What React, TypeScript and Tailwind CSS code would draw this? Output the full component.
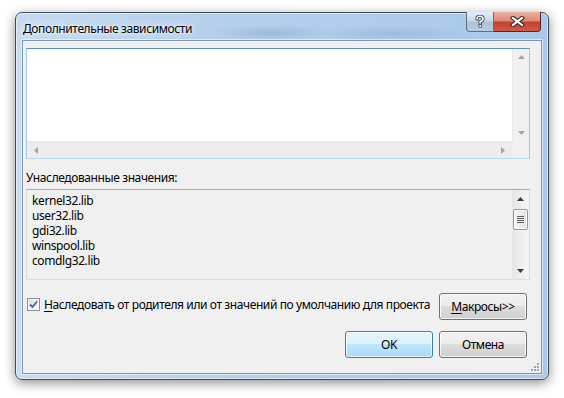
import React from 'react';

const UpArrow = ({ color }: { color: string }) => (
  <svg width="7" height="4" viewBox="0 0 7 4"><path d="M3.5 0 L7 4 L0 4 Z" fill={color} /></svg>
);
const DownArrow = ({ color }: { color: string }) => (
  <svg width="7" height="4" viewBox="0 0 7 4"><path d="M0 0 L7 0 L3.5 4 Z" fill={color} /></svg>
);
const LeftArrow = ({ color }: { color: string }) => (
  <svg width="4" height="7" viewBox="0 0 4 7"><path d="M4 0 L4 7 L0 3.5 Z" fill={color} /></svg>
);
const RightArrow = ({ color }: { color: string }) => (
  <svg width="4" height="7" viewBox="0 0 4 7"><path d="M0 0 L4 3.5 L0 7 Z" fill={color} /></svg>
);

const Button = ({ children, primary }: { children: React.ReactNode; primary?: boolean }) => (
  <button
    className={
      primary
        ? 'w-[88px] h-[27px] rounded-[3px] border border-[#3c7fb1] bg-[linear-gradient(to_bottom,#eaf6fd_0%,#d9f0fc_50%,#bee6fd_50%,#a7d9f5_100%)] shadow-[inset_0_0_0_1px_rgba(255,255,255,0.7)] text-[12px] text-black flex items-center justify-center'
        : 'w-[88px] h-[27px] rounded-[3px] border border-[#707070] bg-[linear-gradient(to_bottom,#f2f2f2_0%,#ebebeb_50%,#dddddd_50%,#cfcfcf_100%)] shadow-[inset_0_0_0_1px_rgba(255,255,255,0.8)] text-[12px] text-black flex items-center justify-center'
    }
  >
    {children}
  </button>
);

const libs = ['kernel32.lib', 'user32.lib', 'gdi32.lib', 'winspool.lib', 'comdlg32.lib'];

export default function App() {
  return (
    <div className="w-[564px] h-[398px] bg-white pl-[15px] pt-[12px] font-['Noto_Sans','DejaVu_Sans',sans-serif] tracking-[-0.4px] text-black">
      {/* window frame */}
      <div className="w-[534px] h-[368px] rounded-[7px] border border-[#3e4b5a] bg-[linear-gradient(to_right,#c6dbf0,#b4cfec_40%,#a9c8ea)] shadow-[inset_0_0_0_1px_rgba(255,255,255,0.55),0_3px_12px_rgba(0,0,0,0.45)] flex flex-col px-[6px] pb-[5px]">
        {/* title bar */}
        <div className="h-[27px] flex justify-between bg-[radial-gradient(ellipse_60px_8px_at_250px_20px,rgba(120,150,185,0.35),transparent),radial-gradient(ellipse_80px_8px_at_370px_21px,rgba(120,150,185,0.3),transparent)]">
          <div className="pl-[1px] pt-[8px] leading-[15px] text-[12px] [text-shadow:0_0_6px_#fff,0_0_3px_#fff]">
            Дополнительные зависимости
          </div>
          <div className="flex -mt-[1px] mr-[1px] h-[20px]">
            <div className="w-[28px] h-[20px] rounded-bl-[4px] border border-t-0 border-[#5f6f82] bg-[linear-gradient(to_bottom,#e4edf6_0%,#c9d8e7_45%,#aec2d7_55%,#b9cde0_100%)] flex items-center justify-center">
              <svg width="10" height="13" viewBox="0 0 10 13">
                <path d="M2 4 Q2 1.3 5 1.3 Q8 1.3 8 4 Q8 5.6 5.2 6.6 V8" fill="none" stroke="#3a4350" strokeWidth="3.4" strokeLinecap="round" />
                <rect x="3.5" y="9.3" width="3.4" height="3.2" fill="#3a4350" />
                <path d="M2 4 Q2 1.3 5 1.3 Q8 1.3 8 4 Q8 5.6 5.2 6.6 V8" fill="none" stroke="#fff" strokeWidth="1.6" strokeLinecap="round" />
                <rect x="4.3" y="10" width="1.8" height="1.8" fill="#fff" />
              </svg>
            </div>
            <div className="w-[47px] h-[20px] rounded-br-[4px] border border-t-0 border-l-0 border-[#4f2a27] bg-[linear-gradient(to_bottom,#eab0a3_0%,#dc8b7b_45%,#c6402f_55%,#d15a44_100%)] flex items-center justify-center">
              <svg width="15" height="11" viewBox="0 0 15 11">
                <path d="M3 2 L12 9 M12 2 L3 9" stroke="#3b2424" strokeWidth="4.2" strokeLinecap="square" />
                <path d="M3 2 L12 9 M12 2 L3 9" stroke="#fff" strokeWidth="2.2" strokeLinecap="square" />
              </svg>
            </div>
          </div>
        </div>

        {/* client area */}
        <div className="flex-1 border border-[#7f93aa] bg-[#f0f0f0] shadow-[0_0_0_1px_rgba(255,255,255,0.55)] flex flex-col">
          {/* editable box */}
          <div className="ml-[3px] mt-[7px] w-[504px] h-[111px] border border-[#a4c9e3] border-t-[#5d8fc0] border-b-[#b7d9ed] flex flex-col">
            <div className="flex-1 flex">
              <div className="flex-1 bg-white"></div>
              <div className="w-[17px] bg-[#f0f0f0] border-l border-[#e8e8e8] flex flex-col items-center justify-between py-[6px]">
                <UpArrow color="#a3a3a3" />
                <DownArrow color="#a3a3a3" />
              </div>
            </div>
            <div className="h-[17px] flex">
              <div className="flex-1 bg-[#ececec] border-t border-[#e6e6e6] flex items-center justify-between px-[7px]">
                <LeftArrow color="#a3a3a3" />
                <RightArrow color="#a3a3a3" />
              </div>
              <div className="w-[17px] bg-[#f0f0f0]"></div>
            </div>
          </div>

          <div className="ml-[3px] mt-[11px] leading-[15px] text-[12px]">Унаследованные значения:</div>

          {/* inherited list */}
          <div className="ml-[3px] mt-[4px] w-[504px] h-[91px] border border-[#dcdcdc] border-t-[#a9a9a9] bg-[#f0f0f0] flex">
            <div className="flex-1 pl-[5px] pt-[3px] text-[12px] leading-[15px]">
              {libs.map((l) => (
                <div key={l} className="h-[15px]">{l}</div>
              ))}
            </div>
            <div className="w-[17px] bg-[linear-gradient(to_right,#e6e6e6,#f5f5f5)] flex flex-col items-center">
              <div className="h-[17px] flex items-center justify-center">
                <UpArrow color="#3c3c3c" />
              </div>
              <div className="mt-[2px] w-[15px] h-[21px] rounded-[2px] border border-[#979797] bg-[linear-gradient(to_right,#f4f4f4,#e2e2e2)] shadow-[inset_0_0_0_1px_rgba(255,255,255,0.8)] flex flex-col items-center justify-center gap-[1px]">
                <div className="w-[7px] h-[1px] bg-[#5e5e5e]"></div>
                <div className="w-[7px] h-[1px] bg-[#5e5e5e]"></div>
                <div className="w-[7px] h-[1px] bg-[#5e5e5e]"></div>
                <div className="w-[7px] h-[1px] bg-[#5e5e5e]"></div>
              </div>
              <div className="mt-auto h-[17px] flex items-center justify-center">
                <DownArrow color="#3c3c3c" />
              </div>
            </div>
          </div>

          {/* checkbox row */}
          <div className="mt-[13px] h-[27px] flex items-center pr-[14px]">
            <div className="ml-[4px] mb-[5px] flex items-center">
              <div className="w-[13px] h-[13px] border border-[#8e8f8f] bg-[linear-gradient(135deg,#dcdcdc,#fbfbfb)] shadow-[inset_0_0_0_1px_#f4f4f4] flex items-center justify-center">
                <svg width="9" height="9" viewBox="0 0 9 9">
                  <path d="M1 4.5 L3.5 7 L8 1.5" fill="none" stroke="#4a5f97" strokeWidth="1.8" />
                </svg>
              </div>
              <div className="ml-[4px] text-[12px] leading-[15px] whitespace-nowrap">
                <span className="underline underline-offset-2">Н</span>аследовать от родителя или от значений по умолчанию для проекта
              </div>
            </div>
            <div className="ml-auto">
              <Button>
                <span className="underline underline-offset-2">М</span>акросы&gt;&gt;
              </Button>
            </div>
          </div>

          {/* OK / Cancel */}
          <div className="mt-[11px] flex justify-end gap-[6px] pr-[14px]">
            <Button primary>OK</Button>
            <Button>Отмена</Button>
          </div>

          <div className="mt-auto mb-[1px] flex justify-end pr-[1px]">
            <svg width="11" height="11" viewBox="0 0 11 11">
              {[
                [8, 2],
                [5, 5],
                [8, 5],
                [2, 8],
                [5, 8],
                [8, 8],
              ].map(([x, y]) => (
                <g key={`${x}-${y}`}>
                  <rect x={x + 1} y={y + 1} width="2" height="2" fill="#fff" />
                  <rect x={x} y={y} width="2" height="2" fill="#a0a0a0" />
                </g>
              ))}
            </svg>
          </div>
        </div>
      </div>
    </div>
  );
}
